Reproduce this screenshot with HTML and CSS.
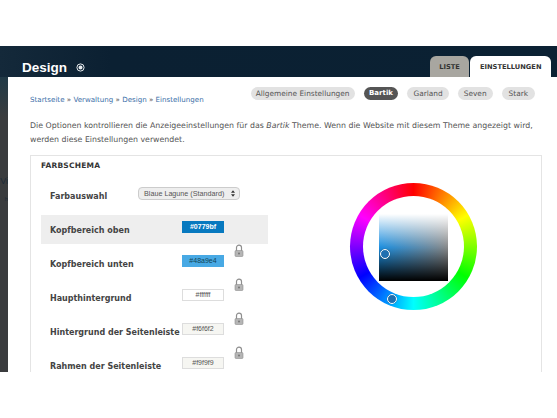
FILE: index.html
```html
<!DOCTYPE html>
<html lang="de">
<head>
<meta charset="utf-8">
<title>Design</title>
<link rel="stylesheet" href="styles.css">
</head>
<body>
<div class="shot">
  <header class="head">
    <h1 class="title">Design <svg class="plus" viewBox="0 0 10 10" width="9" height="9"><circle cx="5" cy="5" r="4" fill="none" stroke="#e8ecef" stroke-width="1.1"/><circle cx="5" cy="5" r="2.2" fill="#e8ecef"/></svg></h1>
    <nav class="tabs"><span class="tab">LISTE</span><span class="tab active">EINSTELLUNGEN</span></nav>
  </header>
  <div class="body">
    <aside class="strip"><span>Vi</span><span class="small">h</span></aside>
    <main class="page">
      <div class="crumbrow">
        <div class="crumbs"><a>Startseite</a> » <a>Verwaltung</a> » <a>Design</a> » <a>Einstellungen</a></div>
        <div class="pills"><span class="pill">Allgemeine Einstellungen</span><span class="pill on">Bartik</span><span class="pill">Garland</span><span class="pill">Seven</span><span class="pill">Stark</span></div>
      </div>
      <p class="intro">Die Optionen kontrollieren die Anzeigeeinstellungen für das <em>Bartik</em> Theme. Wenn die Website mit diesem Theme angezeigt wird, werden diese Einstellungen verwendet.</p>
      <section class="scheme">
        <h2 class="legend">FARBSCHEMA</h2>
        <div class="cols">
          <div class="fields">
            <div class="row"><span class="label short">Farbauswahl</span><span class="select">Blaue Lagune (Standard)<svg viewBox="0 0 6 10" width="4" height="7"><path d="M3 0 6 4H0zM3 10 0 6H6z" fill="#333"/></svg></span></div>
            <div class="row hi"><span class="label">Kopfbereich oben</span><span class="swatch dark">#0779bf</span></div>
            <div class="row"><span class="label">Kopfbereich unten</span><span class="swatch blue">#48a9e4</span><svg class="lock" viewBox="0 0 10 13" width="10" height="13"><path d="M2.5 7V3.6a2.5 2.5 0 0 1 5 0V7" fill="none" stroke="#8f8f8f" stroke-width="1.2"/><rect x="1" y="6.5" width="8" height="6" rx="1" fill="#b5b5b5" stroke="#8f8f8f" stroke-width=".6"/><circle cx="5" cy="9.5" r="1" fill="#777"/></svg></div>
            <div class="row"><span class="label">Haupthintergrund</span><span class="swatch">#ffffff</span><svg class="lock" viewBox="0 0 10 13" width="10" height="13"><path d="M2.5 7V3.6a2.5 2.5 0 0 1 5 0V7" fill="none" stroke="#8f8f8f" stroke-width="1.2"/><rect x="1" y="6.5" width="8" height="6" rx="1" fill="#b5b5b5" stroke="#8f8f8f" stroke-width=".6"/><circle cx="5" cy="9.5" r="1" fill="#777"/></svg></div>
            <div class="row"><span class="label">Hintergrund der Seitenleiste</span><span class="swatch tint">#f6f6f2</span><svg class="lock" viewBox="0 0 10 13" width="10" height="13"><path d="M2.5 7V3.6a2.5 2.5 0 0 1 5 0V7" fill="none" stroke="#8f8f8f" stroke-width="1.2"/><rect x="1" y="6.5" width="8" height="6" rx="1" fill="#b5b5b5" stroke="#8f8f8f" stroke-width=".6"/><circle cx="5" cy="9.5" r="1" fill="#777"/></svg></div>
            <div class="row"><span class="label">Rahmen der Seitenleiste</span><span class="swatch tint">#f9f9f9</span><svg class="lock" viewBox="0 0 10 13" width="10" height="13"><path d="M2.5 7V3.6a2.5 2.5 0 0 1 5 0V7" fill="none" stroke="#8f8f8f" stroke-width="1.2"/><rect x="1" y="6.5" width="8" height="6" rx="1" fill="#b5b5b5" stroke="#8f8f8f" stroke-width=".6"/><circle cx="5" cy="9.5" r="1" fill="#777"/></svg></div>
          </div>
          <div class="wheel">
            <div class="sq"><i class="dot d1"></i></div>
            <i class="dot d2"></i>
          </div>
        </div>
      </section>
    </main>
  </div>
</div>
</body>
</html>
```
FILE: styles.css
```css
*{box-sizing:border-box}
html,body{margin:0;padding:0;background:#fff}
body{width:557px;height:418px;overflow:hidden;font-family:"DejaVu Sans","Liberation Sans",sans-serif}
.shot{margin-top:46px;height:326px;display:flex;flex-direction:column;overflow:hidden}
.head{height:31px;flex:none;background:linear-gradient(90deg,#14293a,#0b2032 20%,#0b2133);display:flex;justify-content:space-between;align-items:flex-end;padding-left:22px}
.title{margin:0;font:700 13.5px "Liberation Sans",sans-serif;color:#fff;display:flex;align-items:center;gap:8.5px;height:20px}
.tabs{display:flex;gap:1px;margin-right:6px}
.tab{height:21px;padding:7px 9.5px 0;font-size:6.7px;font-weight:700;color:#333;background:#a8a6a0;border-radius:6px 6px 0 0}
.tab.active{background:#fff}
.body{flex:1;display:flex;min-height:0;background:linear-gradient(#213a47,#3a3c3e 40px)}
.strip{width:8px;flex:none;display:flex;flex-direction:column;align-items:flex-end;padding-top:98px;color:#1d2b38;font:9px/13px "Liberation Sans",sans-serif;white-space:nowrap}
.strip .small{font-size:6px;margin-top:5px}
.page{flex:1;background:#fff;padding:10px 15px 0 22px;color:#555;min-width:0}
.crumbrow{display:flex;justify-content:space-between;align-items:flex-start;padding-right:7px}
.crumbs{font-size:7.1px;color:#555;margin-top:8px}
.crumbs a{color:#3b6fa8}
.pills{display:flex;gap:9px}
.pill{height:13px;padding:0 5px;line-height:13px;border-radius:7px;background:#e2e2e2;font-size:7.4px;color:#555}
.pill:not(:first-child){padding:0 6px}
.pill:last-child{padding:0 7px}
.pill.on{background:#555;color:#fff;font-weight:700;font-size:7px;padding:0 5.5px}
.intro{margin:15px 0 0;font-size:7.84px;line-height:14px;color:#555}
.scheme{margin-top:8px;border:1px solid #e4e4e4;padding:5px 0 0 10px}
.legend{margin:0;height:10px;font-size:7.5px;line-height:10px;font-weight:700;color:#333;letter-spacing:.2px}
.cols{display:flex}
.fields{width:227px;flex:none;padding-top:10px;display:flex;flex-direction:column;gap:5px}
.row{height:29px;display:flex;align-items:center;padding-left:9px;position:relative}
.label{font-size:8px;font-weight:700;color:#444;width:132px;white-space:nowrap;margin-top:1px}
.label.short{width:88px}
.row.hi{background:#eee}
.select{font:7.2px "Liberation Sans",sans-serif;color:#555;border:1px solid #ccc;border-radius:4px;background:#eee;height:13px;width:102px;display:flex;align-items:center;justify-content:space-between;padding:0 4px 0 5px;margin-bottom:5px}
.swatch{width:42px;height:12px;border:1px solid #ddd;font:7px/10px "Liberation Sans",sans-serif;color:#555;text-align:center;background:#fff;margin-bottom:5px}
.swatch.dark{background:#0779bf;color:#fff;border-color:#0779bf;font-weight:700}
.swatch.blue{background:#48a9e4;color:#145;border-color:#48a9e4}
.swatch.tint{background:#f6f6f2}
.lock{position:absolute;left:193px;top:-5px}
.wheel{position:relative;width:127px;height:127px;margin:12px 0 0 82px;border-radius:50%;background:conic-gradient(#f00,#ff0,#0f0,#0ff,#00f,#f0f,#f00);display:flex;align-items:center;justify-content:center;padding-top:2px}
.wheel::before{content:"";position:absolute;inset:13px;border-radius:50%;background:#fff}
.sq{position:relative;width:69px;height:67px;background:linear-gradient(#fff 0,#fff0 50%,#0000 50%,#000 100%),linear-gradient(90deg,#1c8fe0,#888)}
.dot{position:absolute;width:10px;height:10px;border-radius:50%;background:#1f6fb0;border:1.5px solid #fff;box-shadow:0 0 1px #0006}
.d1{left:1px;top:35px}
.d2{left:37px;top:111px}
```
